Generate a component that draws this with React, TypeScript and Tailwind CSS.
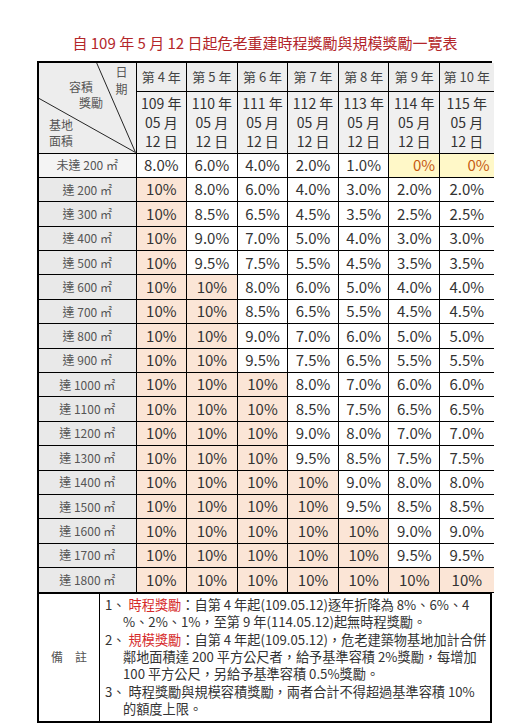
const years = [4, 5, 6, 7, 8, 9, 10];
const timeBonus = [8, 6, 4, 2, 1, 0, 0];
const areas = Array.from({ length: 17 }, (_, i) => 200 + i * 100);

const fmt = (v: number) => (v >= 10 ? "10%" : v.toFixed(1) + "%");

const DiagonalHead = () => (
  <th rowSpan={2} className="relative w-[97px] border-r border-b border-black bg-[#ededed] p-0 font-normal">
    <svg className="absolute inset-0 h-full w-full" viewBox="0 0 97 91" preserveAspectRatio="none">
      <line x1="58" y1="0" x2="97" y2="91" stroke="#222" strokeWidth="1" />
      <line x1="0" y1="36" x2="97" y2="91" stroke="#222" strokeWidth="1" />
    </svg>
    <span className="absolute right-[8px] top-0 flex flex-col text-[12px] leading-[17px] text-[#555]">
      <span>日</span>
      <span>期</span>
    </span>
    <span className="absolute left-[30px] top-[16px] text-[12px] leading-[15px] text-[#555]">容積</span>
    <span className="absolute left-[40px] top-[32px] text-[12px] leading-[15px] text-[#555]">獎勵</span>
    <span className="absolute left-[10px] top-[54px] flex flex-col items-start text-[12px] leading-[16px] text-[#555]">
      <span>基地</span>
      <span>面積</span>
    </span>
  </th>
);

const Note = ({ n, first, rest }: { n: number; first: React.ReactNode; rest: string[] }) => (
  <li className="whitespace-nowrap">
    <div>
      <span className="mr-[3px]">{n}、</span>
      {first}
    </div>
    {rest.map((line) => (
      <div key={line} className="pl-[18px]">{line}</div>
    ))}
  </li>
);

export default function App() {
  return (
    <div className="min-h-[728px] w-[530px] bg-white font-['Noto_Sans_CJK_TC',sans-serif] text-[#333]">
      <h1 className="pt-[33px] pb-[8px] text-center text-[15px] font-normal leading-[20px] text-[#b3262a]">
        自 109 年 5 月 12 日起危老重建時程獎勵與規模獎勵一覽表
      </h1>
      <div className="mx-[37px] w-[455px] border-2 border-black">
        <table className="w-full border-collapse table-fixed">
          <colgroup>
            <col className="w-[97px]" />
            {years.map((y) => (
              <col key={y} className={y === 10 ? "w-[54px]" : "w-[50.6px]"} />
            ))}
          </colgroup>
          <thead>
            <tr className="h-[28px]">
              <DiagonalHead />
              {years.map((y) => (
                <th key={y} className="border border-t-0 border-black bg-[#ededed] text-[13px] font-normal text-[#444] last:border-r-0">
                  第 {y} 年
                </th>
              ))}
            </tr>
            <tr className="h-[62px]">
              {years.map((y) => (
                <th key={y} className="border border-black bg-[#f0f0f0] text-[14px] font-normal leading-[19px] text-[#333] last:border-r-0">
                  <div>{105 + y} 年</div>
                  <div>05 月</div>
                  <div>12 日</div>
                </th>
              ))}
            </tr>
          </thead>
          <tbody className="text-[15px]">
            <tr className="h-[24.4px]">
              <td className="border border-l-0 border-black bg-[#f4f4f4] text-center text-[12px] text-[#555]">未達 200 ㎡</td>
              {timeBonus.map((t, i) =>
                t === 0 ? (
                  <td key={i} className="border border-black bg-[#fff8c8] pr-[4px] text-right text-[#c55a11] last:border-r-0">0%</td>
                ) : (
                  <td key={i} className="border border-black text-center last:border-r-0">{t.toFixed(1)}%</td>
                )
              )}
            </tr>
            {areas.map((a) => (
              <tr key={a} className="h-[24.4px]">
                <td className="border border-l-0 border-black bg-[#e9e9e9] text-center text-[12px] text-[#555]">達 {a} ㎡</td>
                {timeBonus.map((t, i) => {
                  const v = Math.min(10, t + 2 + ((a - 200) / 100) * 0.5);
                  return (
                    <td key={i} className={`border border-black text-center last:border-r-0 ${v >= 10 ? "bg-[#fbe5d6]" : "bg-white"}`}>
                      {fmt(v)}
                    </td>
                  );
                })}
              </tr>
            ))}
          </tbody>
        </table>
        <div className="flex border-t border-black">
          <div className="flex w-[61px] shrink-0 items-center justify-center border-r border-black text-[12px] text-[#555]">
            備　註
          </div>
          <ol className="flex flex-col gap-[1px] pl-[5px] pr-[2px] pt-[2px] pb-[4px] text-[13.2px] leading-[17px] text-[#333]">
            <Note
              n={1}
              first={<><span className="text-[#d62a2a]">時程獎勵</span>：自第 4 年起(109.05.12)逐年折降為 8%、6%、4</>}
              rest={["%、2%、1%，至第 9 年(114.05.12)起無時程獎勵。"]}
            />
            <Note
              n={2}
              first={<><span className="text-[#d62a2a]">規模獎勵</span>：自第 4 年起(109.05.12)，危老建築物基地加計合併</>}
              rest={["鄰地面積達 200 平方公尺者，給予基準容積 2%獎勵，每增加", "100 平方公尺，另給予基準容積 0.5%獎勵。"]}
            />
            <Note
              n={3}
              first="時程獎勵與規模容積獎勵，兩者合計不得超過基準容積 10%"
              rest={["的額度上限。"]}
            />
          </ol>
        </div>
      </div>
    </div>
  );
}
